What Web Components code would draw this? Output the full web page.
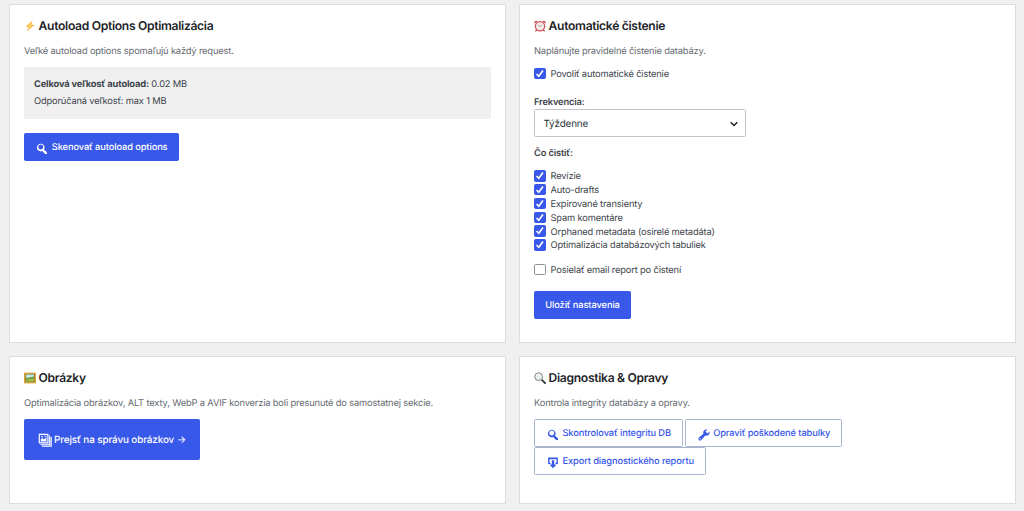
<!DOCTYPE html>
<html lang="sk">
<head>
<meta charset="utf-8">
<title>Optimalizácia databázy</title>
<style>
  :root {
    --color-accent: #3858e9;
    --color-border: #dcdcde;
    --color-heading: #1d2327;
    --color-muted: #646970;
  }

  body {
    margin: 0;
    width: 1024px;
    height: 511px;
    overflow: hidden;
    background: #f0f0f1;
    color: #3c434a;
    font: 9.3px/14px Inter, "Liberation Sans", sans-serif;
    letter-spacing: -0.15px;
    text-rendering: geometricPrecision;
  }
</style>
</head>
<body>
<db-grid>
  <db-card heading="Autoload Options Optimalizácia" icon="bolt">
    <span slot="description">Veľké autoload options spomaľujú každý request.</span>
    <db-notice>
      <div><b>Celková veľkosť autoload:</b> 0.02 MB</div>
      <div>Odporúčaná veľkosť: max 1 MB</div>
    </db-notice>
    <db-button variant="primary" icon="search" style="margin-top: 14px; width: 155px">Skenovať autoload options</db-button>
  </db-card>

  <db-card heading="Automatické čistenie" icon="clock">
    <span slot="description">Naplánujte pravidelné čistenie databázy.</span>
    <db-check checked>Povoliť automatické čistenie</db-check>
    <db-select label="Frekvencia:">Týždenne</db-select>
    <db-checklist label="Čo čistiť:">
      <db-check checked>Revízie</db-check>
      <db-check checked>Auto-drafts</db-check>
      <db-check checked>Expirované transienty</db-check>
      <db-check checked>Spam komentáre</db-check>
      <db-check checked>Orphaned metadata (osirelé metadáta)</db-check>
      <db-check checked>Optimalizácia databázových tabuliek</db-check>
    </db-checklist>
    <db-check style="margin-top: 11px">Posielať email report po čistení</db-check>
    <db-button variant="primary" style="margin-top: 14px; width: 97px">Uložiť nastavenia</db-button>
  </db-card>

  <db-card heading="Obrázky" icon="picture">
    <span slot="description">Optimalizácia obrázkov, ALT texty, WebP a AVIF konverzia boli presunuté do samostatnej sekcie.</span>
    <db-button variant="hero" icon="gallery" style="width: 176px">Prejsť na správu obrázkov →</db-button>
  </db-card>

  <db-card heading="Diagnostika &amp; Opravy" icon="magnifier">
    <span slot="description">Kontrola integrity databázy a opravy.</span>
    <db-actions>
      <db-button icon="search" style="width: 149px">Skontrolovať integritu DB</db-button>
      <db-button icon="wrench" style="width: 157px">Opraviť poškodené tabulky</db-button>
      <db-button icon="export" style="width: 172px">Export diagnostického reportu</db-button>
    </db-actions>
  </db-card>
</db-grid>

<script>
const icons = {
  search: '<path fill="currentColor" d="M12.14 4.18c1.87 1.87 2.11 4.75.72 6.89.12.1.22.21.36.31.2.16.47.36.81.59.34.24.56.39.66.47.42.31.73.57.94.78.32.32.6.65.84 1 .25.35.44.69.59 1.04.14.35.21.68.18 1-.02.32-.14.59-.36.81s-.49.34-.81.36c-.31.02-.65-.04-.99-.19-.35-.14-.7-.34-1.04-.59-.35-.24-.68-.52-1-.84-.21-.21-.47-.52-.77-.93-.1-.13-.25-.35-.47-.66-.22-.32-.4-.57-.56-.78-.16-.2-.29-.35-.44-.5-2.07 1.09-4.69.76-6.44-.98-2.14-2.15-2.14-5.64 0-7.78 2.15-2.15 5.63-2.15 7.78 0zM10.72 9.54c1.36-1.37 1.36-3.58 0-4.95-1.36-1.36-3.58-1.36-4.95 0-1.36 1.37-1.36 3.59 0 4.95 1.37 1.36 3.59 1.36 4.95 0z"/>',
  wrench: '<path fill="currentColor" d="M16.68 9.77c-1.34 1.34-3.3 1.67-4.95.99l-5.41 6.52c-.99.99-2.59.99-3.58 0s-.99-2.59 0-3.57l6.52-5.42c-.68-1.65-.35-3.61.99-4.95 1.28-1.28 3.12-1.62 4.72-1.06l-2.89 2.89 2.82 2.82 2.86-2.87c.53 1.58.18 3.39-1.08 4.65zM3.81 16.21c.4.39 1.04.39 1.43 0 .4-.4.4-1.04 0-1.43-.39-.4-1.03-.4-1.43 0-.39.39-.39 1.03 0 1.43z"/>',
  export: '<path fill="currentColor" d="M3 2h14v9.5h-3.5v-2H15V4.5H5v5h1.500v2H3zM8.300 6h3.400v6H15l-5 5.500L5 12h3.300z"/>',
  gallery: '<path fill="currentColor" fill-rule="evenodd" d="M1 1h14v14H1zm1.700 1.700v10.600h10.600V2.700z"/><path fill="currentColor" d="M4 12V8.800l2.200-1.600 2.300 1.700L12 6v6zM4.600 4.200h2.200v2H4.600zM9.500 4h2.500v1.500H9.500z"/><path fill="none" stroke="currentColor" stroke-width="1.600" d="M3.700 16.700h13V3.500M5.800 18.900h13.100V5.700"/>',
  bolt: '<path fill="#f3b440" d="M14.500 1 2.600 11l5.600.5-4 7.500L17.800 8.400l-5.800-.5z"/><path fill="#ffd565" d="m12.800 3-7.400 6.900 5.200.5-3.300 5.500 7.300-6.500-5-.5z"/>',
  clock: '<path stroke="#9c4146" stroke-width="2" d="m4.500 16-2 3M15.500 16l2 3"/><path fill="#c4474b" d="M1 6C-.8 2.600 3-.3 6.300 1.700zM19 6c1.800-3.400-2-6.300-5.300-4.300z"/><circle cx="10" cy="10.500" r="8.700" fill="#c95054"/><circle cx="10" cy="10.500" r="6.700" fill="#f5ece7"/><path fill="none" stroke="#7a706e" stroke-width="1" d="m6.200 8.600 3.800 2.100 3.400-2.200"/>',
  picture: '<path fill="#d9a63c" d="M0 1h20v18H0z"/><path fill="#8a6a23" d="M2.300 3.200h15.400v13.600H2.300z"/><path fill="#a9dce4" d="M3.200 4h13.600v6H3.200z"/><path fill="#e8f4ea" d="M5 6h7v2H5z"/><path fill="#6f9d3f" d="M3.200 10.500c5-2 9-1.500 13.600-3V16H3.200z"/><path fill="#a6bc4f" d="M3.200 13.500c5-1.500 9-.5 13.600-2.500V16H3.200z"/>',
  magnifier: '<path stroke="#34383b" stroke-width="3.200" stroke-linecap="round" d="m13.500 13.500 5 5"/><circle cx="7.800" cy="7.800" r="6.500" fill="#e9eeef" stroke="#747a7d" stroke-width="1.500"/><path fill="none" stroke="#fff" stroke-width="1.300" d="M4 7a4 4 0 0 1 3-3"/>',
};

const svg = (name) => `<svg viewBox="0 0 20 20" aria-hidden="true">${icons[name] || ''}</svg>`;

class DbElement extends HTMLElement {
  constructor() {
    super();
    this.attachShadow({ mode: 'open' });
  }

  connectedCallback() {
    this.shadowRoot.innerHTML = this.render();
  }
}

class DbGrid extends DbElement {
  render() {
    return /* html */ `
      <style>
        :host {
          display: grid;
          grid-template-columns: 497px 497px;
          grid-template-rows: 339px 148px;
          gap: 13px;
          padding: 4px 9px;
        }
      </style>
      <slot></slot>
    `;
  }
}

class DbCard extends DbElement {
  render() {
    return /* html */ `
      <style>
        :host {
          display: block;
          box-sizing: border-box;
          background: #fff;
          border: 1px solid var(--color-border);
          padding: 13px 14px;
        }
        h2 {
          display: flex;
          align-items: center;
          gap: 2.6px;
          margin: 0;
          color: var(--color-heading);
          font-size: 12.1px;
          font-weight: 600;
          line-height: 16px;
          letter-spacing: -0.31px;
        }
        svg { width: 12px; height: 12px; }
        p {
          margin: 11px 0 8px;
          color: var(--color-muted);
          line-height: 14px;
        }
      </style>
      <h2>${svg(this.getAttribute('icon'))}<span>${this.getAttribute('heading').replace('&', '&amp;')}</span></h2>
      <p><slot name="description"></slot></p>
      <slot></slot>
    `;
  }
}

class DbNotice extends DbElement {
  render() {
    return /* html */ `
      <style>
        :host {
          display: block;
          box-sizing: border-box;
          height: 52px;
          padding: 9px 10px;
          background: #f0f0f1;
        }
        ::slotted(div) { line-height: 17px; }
      </style>
      <slot></slot>
    `;
  }
}

class DbButton extends DbElement {
  render() {
    return /* html */ `
      <style>
        :host {
          display: flex;
          align-items: center;
          justify-content: center;
          gap: 2.4px;
          box-sizing: border-box;
          height: 28px;
          border: 1px solid #a9b4cf;
          border-radius: 1.5px;
          background: #fff;
          color: var(--color-accent);
          font-weight: 500;
          letter-spacing: -0.11px;
          white-space: nowrap;
        }
        :host([variant]) {
          background: var(--color-accent);
          border-color: var(--color-accent);
          color: #fff;
        }
        :host([variant="hero"]) {
          height: 41px;
          font-size: 9.9px;
          gap: 2px;
        }
        svg { width: 14px; height: 14px; margin-top: 3px; }
        span { padding-top: 2px; }
        :host([variant="hero"]) svg { margin-top: 1px; }
        :host([variant="hero"]) span { padding-top: 1px; }
      </style>
      ${this.hasAttribute('icon') ? svg(this.getAttribute('icon')) : ''}
      <span><slot></slot></span>
    `;
  }
}

class DbCheck extends DbElement {
  render() {
    return /* html */ `
      <style>
        :host {
          display: flex;
          align-items: center;
          gap: 5px;
          height: 13.8px;
        }
        i {
          display: block;
          box-sizing: border-box;
          width: 11.5px;
          height: 11.5px;
          margin-top: -1px;
          border: 1px solid #8c8f94;
          border-radius: 1.5px;
          background: #fff;
        }
        :host([checked]) i {
          border-color: var(--color-accent);
          background: var(--color-accent);
        }
        svg { display: none; width: 100%; height: 100%; }
        :host([checked]) svg { display: block; }
        span { padding-top: 2px; }
      </style>
      <i><svg viewBox="0 0 10 10"><path d="m1.6 5.3 2.4 2.4 4.4-6.2" fill="none" stroke="#fff" stroke-width="1.7"/></svg></i>
      <span><slot></slot></span>
    `;
  }
}

class DbSelect extends DbElement {
  render() {
    return /* html */ `
      <style>
        :host { display: block; margin-top: 14.2px; }
        label { display: block; height: 14px; font-weight: 600; line-height: 16px; }
        div {
          display: flex;
          align-items: center;
          justify-content: space-between;
          box-sizing: border-box;
          width: 212px;
          height: 28px;
          padding: 0 7px 0 8.5px;
          border: 1px solid #c3c4c7;
          border-radius: 1.5px;
          color: #2c3338;
          font-size: 9.9px;
        }
        span { padding-top: 2px; }
        svg { width: 8px; height: 8px; margin-top: 2px; }
      </style>
      <label>${this.getAttribute('label')}</label>
      <div>
        <span><slot></slot></span>
        <svg viewBox="0 0 8 8"><path d="m.7 2.3 3.3 3.2 3.3-3.2" fill="none" stroke="#1d2327" stroke-width="1.5"/></svg>
      </div>
    `;
  }
}

class DbChecklist extends DbElement {
  render() {
    return /* html */ `
      <style>
        :host { display: block; margin-top: 9px; }
        label { display: block; height: 14px; margin-bottom: 9.5px; font-weight: 600; line-height: 16px; }
      </style>
      <label>${this.getAttribute('label')}</label>
      <slot></slot>
    `;
  }
}

class DbActions extends DbElement {
  render() {
    return /* html */ `
      <style>
        :host { display: flex; flex-wrap: wrap; column-gap: 2px; width: 330px; }
      </style>
      <slot></slot>
    `;
  }
}

customElements.define('db-grid', DbGrid);
customElements.define('db-card', DbCard);
customElements.define('db-notice', DbNotice);
customElements.define('db-button', DbButton);
customElements.define('db-check', DbCheck);
customElements.define('db-select', DbSelect);
customElements.define('db-checklist', DbChecklist);
customElements.define('db-actions', DbActions);
</script>
</body>
</html>
